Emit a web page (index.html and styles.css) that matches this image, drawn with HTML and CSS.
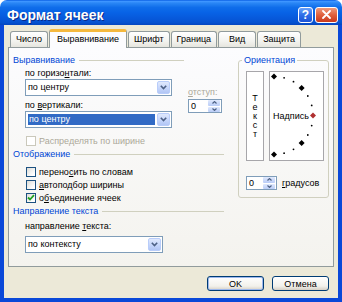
FILE: index.html
```html
<!DOCTYPE html>
<html lang="ru">
<head>
    <meta charset="UTF-8">
    <title>Формат ячеек</title>
    <link rel="stylesheet" href="styles.css">
</head>
<body>
<div class="window">

    <!-- заголовок окна -->
    <div class="titlebar">
        <span class="title">Формат ячеек</span>
        <div class="title-buttons">
            <span class="tbtn help">?</span>
            <span class="tbtn close">
                <svg width="9" height="9" viewBox="0 0 9 9"><path d="M1 1 L8 8 M8 1 L1 8" stroke="#fff" stroke-width="1.8" stroke-linecap="round"/></svg>
            </span>
        </div>
    </div>

    <div class="client">
        <!-- вкладки -->
        <div class="tabs">
            <span class="tab">Число</span>
            <span class="tab active">Выравнивание</span>
            <span class="tab">Шрифт</span>
            <span class="tab">Граница</span>
            <span class="tab">Вид</span>
            <span class="tab">Защита</span>
        </div>

        <div class="panel">
            <div class="left">
                <div class="group-head short">Выравнивание</div>

                <div class="align-row">
                    <div class="align-fields">
                        <div class="field-label first">по горизо<u>н</u>тали:</div>
                        <div class="combo">
                            <span class="combo-text">по центру</span>
                            <span class="combo-btn"><svg width="7" height="5" viewBox="0 0 7 5"><polyline points="0.8,0.8 3.5,3.6 6.2,0.8" fill="none" stroke="#4D6185" stroke-width="1.6"/></svg></span>
                        </div>
                        <div class="field-label">по <u>в</u>ертикали:</div>
                        <div class="combo selected">
                            <span class="combo-text"><span class="hl">по центру</span></span>
                            <span class="combo-btn"><svg width="7" height="5" viewBox="0 0 7 5"><polyline points="0.8,0.8 3.5,3.6 6.2,0.8" fill="none" stroke="#4D6185" stroke-width="1.6"/></svg></span>
                        </div>
                    </div>
                    <div class="indent">
                        <div class="field-label disabled"><u>о</u>тступ:</div>
                        <div class="spin">
                            <span class="spin-val">0</span>
                            <span class="spin-btns">
                                <span class="spin-btn"><svg width="5" height="3" viewBox="0 0 5 3"><polyline points="0.5,2.5 2.5,0.6 4.5,2.5" fill="none" stroke="#4D6185" stroke-width="1.2"/></svg></span>
                                <span class="spin-btn"><svg width="5" height="3" viewBox="0 0 5 3"><polyline points="0.5,0.5 2.5,2.4 4.5,0.5" fill="none" stroke="#4D6185" stroke-width="1.2"/></svg></span>
                            </span>
                        </div>
                    </div>
                </div>

                <div class="check disabled first-check"><span class="box"></span><span>Распределять по ширине</span></div>

                <div class="group-head">Отображение</div>
                <div class="check top-gap"><span class="box"></span><span>перено<u>с</u>ить по словам</span></div>
                <div class="check"><span class="box"></span><span><u>а</u>втоподбор ширины</span></div>
                <div class="check"><span class="box"><svg width="8" height="7" viewBox="0 0 8 7"><polyline points="1,3.5 3,5.5 7,1.2" fill="none" stroke="#21A121" stroke-width="1.8"/></svg></span><span>о<u>б</u>ъединение ячеек</span></div>

                <div class="group-head">Направление текста</div>
                <div class="field-label dir-label">направление <u>т</u>екста:</div>
                <div class="combo dir-combo">
                    <span class="combo-text">по контексту</span>
                    <span class="combo-btn"><svg width="7" height="5" viewBox="0 0 7 5"><polyline points="0.8,0.8 3.5,3.6 6.2,0.8" fill="none" stroke="#4D6185" stroke-width="1.6"/></svg></span>
                </div>
            </div>

            <!-- ориентация -->
            <fieldset class="orient">
                <legend>Ориентация</legend>
                <div class="orient-row">
                    <div class="vtext">
                        <span>Т</span><span>е</span><span>к</span><span>с</span><span>т</span>
                    </div>
                    <div class="dial">
                        <svg width="53" height="88" viewBox="0 0 53 88">
                            <polygon points="4,1.5 7,4.5 4,7.5 1,4.5" fill="#000"/>
                            <circle cx="14.1" cy="5.8" r="0.9" fill="#000"/>
                            <circle cx="23.5" cy="9.7" r="0.9" fill="#000"/>
                            <polygon points="31.6,12.9 34.6,15.9 31.6,18.9 28.6,15.9" fill="#000"/>
                            <circle cx="37.8" cy="24" r="0.9" fill="#000"/>
                            <circle cx="41.7" cy="33.4" r="0.9" fill="#000"/>
                            <polygon points="43,40.5 46,43.5 43,46.5 40,43.5" fill="#B03030"/>
                            <circle cx="41.7" cy="53.6" r="0.9" fill="#000"/>
                            <circle cx="37.8" cy="63" r="0.9" fill="#000"/>
                            <polygon points="31.6,68.1 34.6,71.1 31.6,74.1 28.6,71.1" fill="#000"/>
                            <circle cx="23.5" cy="77.3" r="0.9" fill="#000"/>
                            <circle cx="14.1" cy="81.2" r="0.9" fill="#000"/>
                            <polygon points="4,79.5 7,82.5 4,85.5 1,82.5" fill="#000"/>
                            <text x="3" y="47" class="dial-text">Надпись</text>
                        </svg>
                    </div>
                </div>
                <div class="deg-row">
                    <div class="spin deg">
                        <span class="spin-val">0</span>
                        <span class="spin-btns">
                            <span class="spin-btn"><svg width="5" height="3" viewBox="0 0 5 3"><polyline points="0.5,2.5 2.5,0.6 4.5,2.5" fill="none" stroke="#4D6185" stroke-width="1.2"/></svg></span>
                            <span class="spin-btn"><svg width="5" height="3" viewBox="0 0 5 3"><polyline points="0.5,0.5 2.5,2.4 4.5,0.5" fill="none" stroke="#4D6185" stroke-width="1.2"/></svg></span>
                        </span>
                    </div>
                    <span><u>г</u>радусов</span>
                </div>
            </fieldset>
        </div>

        <!-- кнопки -->
        <div class="buttons">
            <span class="btn default">OK</span>
            <span class="btn">Отмена</span>
        </div>
    </div>
</div>
</body>
</html>
```

FILE: styles.css
```css
/* окно */
html, body {
    margin: 0;
    padding: 0;
}

body {
    width: 342px;
    height: 302px;
    overflow: hidden;
    background: #fff;
    font-family: "Liberation Sans", Arial, sans-serif;
    font-size: 9px;
    color: #000;
}

u {
    text-decoration-thickness: 1px;
    text-underline-offset: 1px;
}

.window {
    height: 302px;
    display: flex;
    flex-direction: column;
    border-radius: 7px 7px 0 0;
    overflow: hidden;
}

/* заголовок */
.titlebar {
    height: 25px;
    flex: none;
    box-sizing: border-box;
    padding: 4px 4px 0 7px;
    display: flex;
    align-items: center;
    justify-content: space-between;
    background: linear-gradient(180deg, #0A5FE4 0%, #3D95FF 6%, #2A87F5 12%, #0F6DEA 30%, #0863E6 50%, #0758DA 75%, #0552D0 90%, #0546BF 100%);
}

.title {
    color: #fff;
    font-weight: bold;
    font-size: 14px;
    text-shadow: 1px 1px 0 #0A2A8A;
}

.title-buttons {
    display: flex;
    gap: 2px;
}

.tbtn {
    height: 16px;
    box-sizing: border-box;
    border: 1px solid #fff;
    border-radius: 3px;
    display: flex;
    align-items: center;
    justify-content: center;
    color: #fff;
}

.help {
    width: 15px;
    font-weight: bold;
    font-size: 12px;
    background: linear-gradient(180deg, #6BA2FA, #2F6EE8 50%, #1B52D6);
}

.close {
    width: 23px;
    background: linear-gradient(180deg, #EE9A7C, #E0603C 50%, #C8391C);
}

/* клиентская область */
.client {
    flex: 1;
    display: flex;
    flex-direction: column;
    background: #ECE9D8;
    border: 4px solid #0A48D8;
    border-top: 0;
    padding: 4px 4px 7px 4px;
}

/* вкладки */
.tabs {
    height: 18px;
    display: flex;
    align-items: flex-end;
    gap: 1px;
    padding-left: 2px;
    position: relative;
    z-index: 2;
}

.tab {
    height: 16px;
    min-width: 38px;
    box-sizing: border-box;
    padding: 0 5px;
    text-align: center;
    line-height: 15px;
    border: 1px solid #919B9C;
    border-bottom: 0;
    border-radius: 3px 3px 0 0;
    background: linear-gradient(180deg, #FFFFFF, #F3F3EF 60%, #E6E5DE);
}

.tab.active {
    height: 19px;
    margin-bottom: -1px;
    padding: 0 7px;
    line-height: 14px;
    border-top: 3px solid #F5B93E;
    background: #FCFCFE;
}

/* панель */
.panel {
    height: 220px;
    flex: none;
    box-sizing: border-box;
    border: 1px solid #919B9C;
    background: linear-gradient(180deg, #FCFCFE, #F4F3EE);
    padding: 6px 4px 0 4px;
    display: grid;
    grid-template-columns: 1fr 91px;
    column-gap: 14px;
    align-items: start;
}

.group-head {
    height: 12px;
    line-height: 12px;
    display: flex;
    align-items: center;
    color: #0046D5;
    margin-top: 1px;
}

.group-head::after {
    content: "";
    flex: 1;
    border-top: 1px solid #D0D0BF;
    margin-left: 4px;
}

.group-head.short {
    margin-top: 0;
}

.group-head.short::after {
    margin-right: 40px;
}

.field-label {
    height: 12px;
    line-height: 12px;
    margin-top: 3px;
}

.field-label.first {
    margin-top: 1px;
}

.disabled {
    color: #ACA899;
}

.align-row {
    display: flex;
    padding-left: 12px;
}

.align-fields {
    width: 147px;
}

.align-fields .combo:first-of-type {
    margin-top: 3px;
}

/* выпадающий список */
.combo {
    height: 17px;
    box-sizing: border-box;
    border: 1px solid #7F9DB9;
    background: #fff;
    padding: 1px;
    display: flex;
    align-items: center;
}

.combo-text {
    flex: 1;
    padding-left: 1px;
    line-height: 13px;
}

.combo.selected .hl {
    display: block;
    margin-right: 2px;
    padding-left: 1px;
    height: 11px;
    line-height: 11px;
    background: #316AC5;
    color: #fff;
}

.combo-btn {
    width: 13px;
    height: 13px;
    box-sizing: border-box;
    border: 1px solid #B9CDFA;
    border-radius: 2px;
    background: linear-gradient(180deg, #E0E9FD, #C3D4FA 60%, #B2C6F5);
    display: flex;
    align-items: center;
    justify-content: center;
}

.indent {
    margin-left: 16px;
    padding-top: 17px;
}

/* счётчик */
.spin {
    width: 34px;
    height: 14px;
    box-sizing: border-box;
    border: 1px solid #7F9DB9;
    background: #fff;
    display: flex;
    margin-top: 1px;
}

.spin-val {
    flex: 1;
    padding-left: 2px;
    line-height: 12px;
}

.spin-btns {
    width: 12px;
    display: flex;
    flex-direction: column;
    gap: 1px;
    padding: 0 1px 0 0;
}

.spin-btn {
    flex: 1;
    border-radius: 1px;
    background: linear-gradient(180deg, #E0E9FD, #B9CCF7);
    display: flex;
    align-items: center;
    justify-content: center;
}

/* флажки */
.check {
    height: 13px;
    display: flex;
    align-items: center;
    gap: 3px;
    padding-left: 13px;
}

.check.first-check {
    margin-top: 6px;
}

.check.top-gap {
    margin-top: 5px;
}

.box {
    width: 10px;
    height: 10px;
    box-sizing: border-box;
    border: 1px solid #1C5180;
    background: linear-gradient(135deg, #DCDCD7, #FFFFFF 80%);
    display: flex;
    align-items: center;
    justify-content: center;
}

.check.disabled .box {
    border-color: #CAC8BB;
    background: #fff;
}

.dir-label {
    padding-left: 12px;
}

.dir-combo {
    width: 138px;
    margin: 4px 0 0 12px;
}

/* ориентация */
.orient {
    margin: 0;
    padding: 0 0 7px 7px;
    border: 1px solid #D0D0BF;
    border-radius: 3px;
    min-width: 0;
}

.orient legend {
    padding: 0 2px;
    margin-left: -4px;
    line-height: 12px;
    color: #0046D5;
}

.orient-row {
    display: flex;
    gap: 5px;
    margin-top: 5px;
}

.vtext {
    width: 18px;
    height: 90px;
    box-sizing: border-box;
    border: 1px solid #A7A6AA;
    background: #fff;
    display: flex;
    flex-direction: column;
    align-items: center;
    justify-content: center;
    line-height: 9px;
}

.dial {
    width: 55px;
    height: 90px;
    box-sizing: border-box;
    border: 1px solid #A7A6AA;
    background: #fff;
}

.dial svg {
    display: block;
}

.dial-text {
    font-family: "Liberation Sans", Arial, sans-serif;
    font-size: 9px;
}

.deg-row {
    display: flex;
    align-items: center;
    gap: 5px;
    margin-top: 15px;
}

.spin.deg {
    width: 31px;
    margin-top: 0;
}

/* кнопки */
.buttons {
    display: flex;
    justify-content: flex-end;
    gap: 8px;
    margin-top: 9px;
    padding-right: 5px;
}

.btn {
    width: 57px;
    height: 15px;
    box-sizing: border-box;
    border: 1px solid #003C74;
    border-radius: 3px;
    background: linear-gradient(180deg, #FFFFFF, #F2F1EB 70%, #D6D0C5);
    display: flex;
    align-items: center;
    justify-content: center;
}

.btn.default {
    box-shadow: inset 0 0 0 1px #9DB8ED;
}
```
